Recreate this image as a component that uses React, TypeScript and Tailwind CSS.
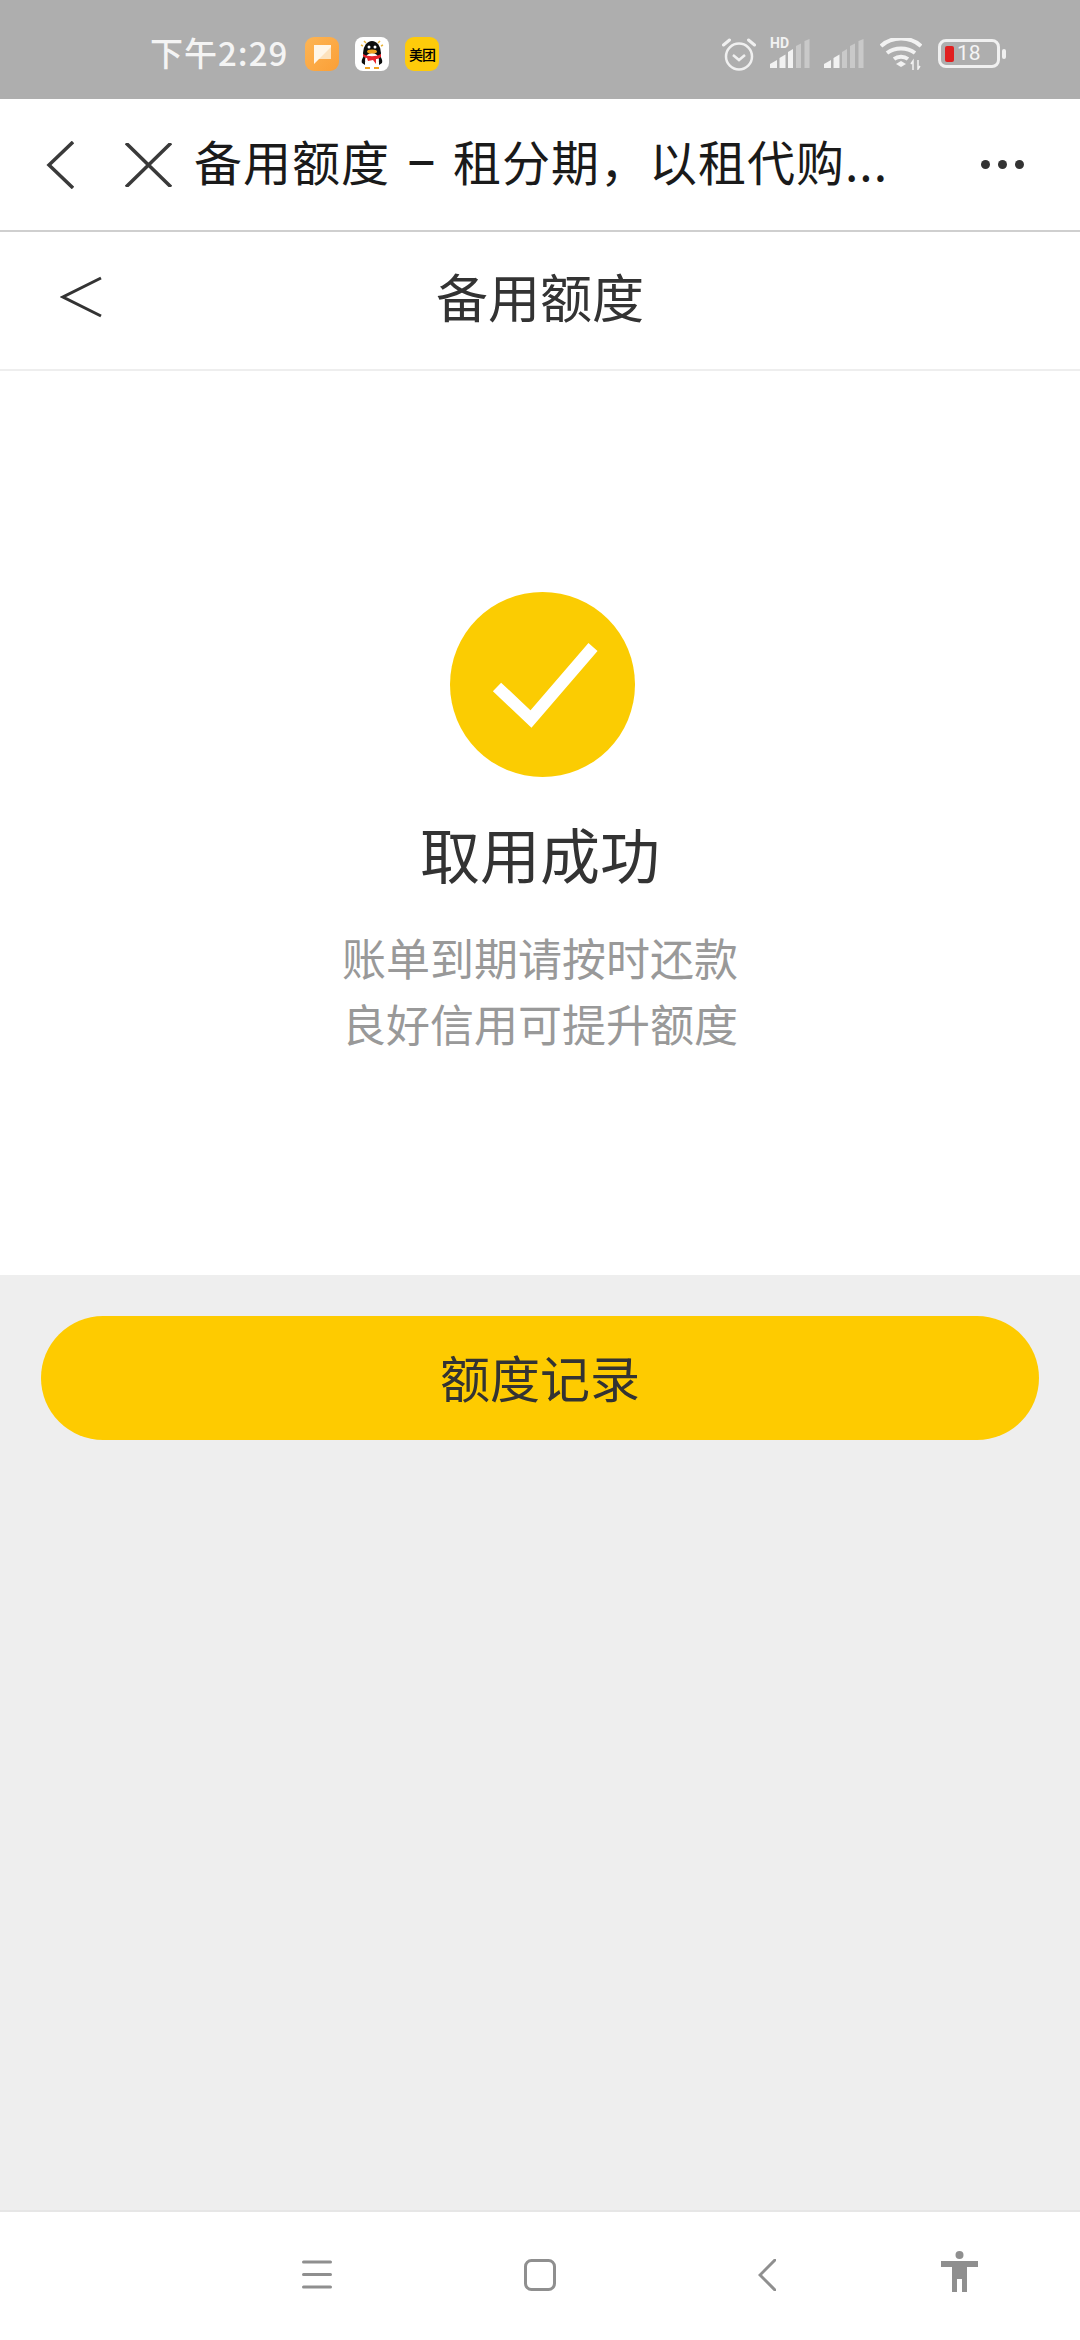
const cjk = "font-['Noto_Sans_CJK_SC','Noto_Sans',sans-serif]";

function Signal({ hd }: { hd?: boolean }) {
  return (
    <svg width="40" height="29" viewBox="0 0 40 29" className="block">
      <path d="M0 29v-4l7-4v8z" fill="#f2f2f2" />
      <path d="M9.500 29V19l6-3.500V29z" fill="#f2f2f2" />
      <path d="M18 29V13l5-3v19z" fill={hd ? "#f2f2f2" : "#c9c9c9"} />
      <path d="M26 29V7l5-2.500V29z" fill="#c9c9c9" />
      <path d="M34.500 29V2l5-2v29z" fill="#c9c9c9" />
    </svg>
  );
}

function StatusBar() {
  return (
    <div className={`h-[99px] bg-[#aeaeae] flex items-center pl-[150px] pr-[74px] pt-[8px] ${cjk}`}>
      <span className="text-[33px] leading-none text-[#f4f4f4] tracking-[1px] w-[155px] font-medium pb-[2px]">下午2:29</span>
      <svg width="34" height="34" viewBox="0 0 34 34" className="block">
        <defs>
          <linearGradient id="o" x1="0" y1="0" x2="1" y2="1">
            <stop offset="0" stopColor="#fdb555" />
            <stop offset="1" stopColor="#fb9f36" />
          </linearGradient>
        </defs>
        <rect width="34" height="34" rx="9" fill="url(#o)" />
        <path d="M9 8h17v14H14l-5 5z" fill="#fff6e8" />
        <path d="M26 10v12H14z" fill="#fde2bd" />
      </svg>
      <svg width="34" height="34" viewBox="0 0 34 34" className="ml-[16px] block">
        <rect width="34" height="34" rx="8" fill="#fff" />
        <ellipse cx="17" cy="16" rx="9" ry="12" fill="#0d0d0d" />
        <path d="M7 26c-1-3 1-6 3-8v10zM27 26c1-3-1-6-3-8v10z" fill="#0d0d0d" />
        <ellipse cx="17" cy="23" rx="7" ry="7" fill="#fff" />
        <ellipse cx="17" cy="14.500" rx="5" ry="2" fill="#f0a11f" />
        <circle cx="14" cy="10" r="1.500" fill="#fff" />
        <circle cx="20" cy="10" r="1.500" fill="#fff" />
        <path d="M8 17c5 3 13 3 18 0v3c-3 2-4 2-5 2v5l-3-4-5 1-1-3c-2 0-3-1-4-2z" fill="#e8232c" />
        <path d="M9 4l2 2M25 4l-2 2M6 8l2 1M28 8l-2 1" stroke="#e8b33a" strokeWidth="1.500" />
        <path d="M10 31h5M19 31h5" stroke="#f0a11f" strokeWidth="2" />
      </svg>
      <div className="ml-[16px] w-[34px] h-[34px] rounded-[9px] bg-[#fecb0a] flex items-center justify-center text-[14px] leading-none text-black whitespace-nowrap font-medium overflow-hidden tracking-[-1px]">
        美团
      </div>
      <div className="ml-auto flex items-center">
        <svg width="34" height="34" viewBox="0 0 34 34" className="block">
          <circle cx="17" cy="19.500" r="13" fill="none" stroke="#f0f0f0" strokeWidth="2.500" />
          <path d="M11 18l6 5 6-5" fill="none" stroke="#f0f0f0" strokeWidth="2.500" />
          <path d="M1.500 8l6-5M32.500 8l-6-5" stroke="#f0f0f0" strokeWidth="3" strokeLinecap="round" />
        </svg>
        <div className="ml-[14px] relative w-[40px] h-[29px]">
          <Signal hd />
          <span className="absolute left-[0px] top-[-3px] font-['Roboto',sans-serif] text-[14px] leading-none font-bold text-[#f2f2f2]">HD</span>
        </div>
        <div className="ml-[14px]">
          <Signal />
        </div>
        <svg width="42" height="32" viewBox="0 0 42 32" className="ml-[16px] block">
          <path d="M1 8c11-10 29-10 40 0M7 15c8-6 20-6 28 0M14 21c4-3 10-3 14 0" fill="none" stroke="#f2f2f2" strokeWidth="4" />
          <path d="M16 26l5-3 5 3-5 3z" fill="#f2f2f2" />
          <path d="M33 32v-9l-2 3M38 22v9l2-3" fill="none" stroke="#f2f2f2" strokeWidth="1.500" />
        </svg>
        <div className="ml-[16px] w-[62px] h-[29px] border-[3px] border-[#f0f0f0] rounded-[8px] relative flex items-center">
          <div className="ml-[4px] w-[9px] h-[16px] rounded-[2px] bg-[#e01f1f]" />
          <span className="ml-[3px] font-['Roboto',sans-serif] text-[21px] leading-none text-[#f4f4f4]">18</span>
        </div>
        <div className="ml-[2px] w-[4px] h-[10px] rounded-[2px] bg-[#f0f0f0]" />
      </div>
    </div>
  );
}

function TopNav() {
  return (
    <div className={`h-[133px] bg-white border-b-[2px] border-[#cfcfcf] flex items-center ${cjk}`}>
      <svg width="28" height="48" viewBox="0 0 28 48" className="ml-[46px] block">
        <path d="M27 1L3 24l24 23" fill="none" stroke="#3a3a3a" strokeWidth="3.500" />
      </svg>
      <svg width="47" height="44" viewBox="0 0 47 44" className="ml-[51px] block">
        <path d="M1 0l45 44M46 0L1 44" fill="none" stroke="#3a3a3a" strokeWidth="3.500" />
      </svg>
      <span className="ml-[22px] pb-[10px] text-[48px] leading-none tracking-[1px] text-[#1a1a1a] whitespace-nowrap">备用额度<span className="inline-block w-[63px] text-center font-medium tracking-normal">−</span>租分期，以租代购...</span>
      <div className="ml-auto mr-[56px] flex gap-[8px]">
        <div className="w-[9px] h-[9px] rounded-full bg-[#333]" />
        <div className="w-[9px] h-[9px] rounded-full bg-[#333]" />
        <div className="w-[9px] h-[9px] rounded-full bg-[#333]" />
      </div>
    </div>
  );
}

function SubNav() {
  return (
    <div className={`relative h-[139px] bg-white border-b-[2px] border-[#eeeeee] flex items-center justify-center ${cjk}`}>
      <svg width="42" height="42" viewBox="0 0 42 42" className="absolute left-[60px] top-[44px] block">
        <path d="M41 2L3 21l38 19" fill="none" stroke="#333" strokeWidth="3" />
      </svg>
      <span className="pb-[10px] text-[52px] leading-none text-[#333]">备用额度</span>
    </div>
  );
}

function Result() {
  return (
    <div className={`h-[904px] bg-white flex flex-col items-center pt-[221px] ${cjk}`}>
      <svg width="185" height="185" viewBox="0 0 185 185" className="block translate-x-[2px]">
        <circle cx="92.500" cy="92.500" r="92.500" fill="#fbcc02" />
        <path d="M47 95l34 32 62-72" fill="none" stroke="#fff" strokeWidth="12" />
      </svg>
      <div className="mt-[38px] text-[60px] leading-[76px] text-[#333]">取用成功</div>
      <div className="mt-[33px] text-[44px] leading-[66px] text-[#999] text-center">
        <div>账单到期请按时还款</div>
        <div>良好信用可提升额度</div>
      </div>
    </div>
  );
}

function BottomNav() {
  return (
    <div className="relative h-[130px] bg-white border-t-[2px] border-[#e6e6e6]">
      <svg width="30" height="30" viewBox="0 0 30 30" className="absolute left-[302px] top-[48px] block">
        <path d="M1.500 2h27M1.500 14.500h27M1.500 27h27" stroke="#8f8f8f" strokeWidth="3" strokeLinecap="round" />
      </svg>
      <svg width="32" height="32" viewBox="0 0 32 32" className="absolute left-[524px] top-[47px] block">
        <rect x="1.500" y="1.500" width="29" height="29" rx="6" fill="none" stroke="#8f8f8f" strokeWidth="3" />
      </svg>
      <svg width="18" height="32" viewBox="0 0 18 32" className="absolute left-[758px] top-[47px] block">
        <path d="M17 1L2 16l15 15" fill="none" stroke="#8f8f8f" strokeWidth="3" strokeLinecap="round" />
      </svg>
      <svg width="37" height="41" viewBox="0 0 37 41" className="absolute left-[941px] top-[39px] block">
        <circle cx="18.500" cy="4" r="4" fill="#8f8f8f" />
        <path d="M0 10h37v6H26v25h-5V28h-5v13h-5V16H0z" fill="#8f8f8f" />
      </svg>
    </div>
  );
}

export default function App() {
  return (
    <div className="w-[1080px] h-[2340px] flex flex-col bg-[#eeeeee] overflow-hidden">
      <StatusBar />
      <TopNav />
      <SubNav />
      <Result />
      <div className={`flex-1 px-[41px] pt-[41px] ${cjk}`}>
        <div className="h-[124px] pb-[5px] rounded-full bg-[#fecb00] flex items-center justify-center text-[50px] leading-none text-[#333]">
          额度记录
        </div>
      </div>
      <BottomNav />
    </div>
  );
}
